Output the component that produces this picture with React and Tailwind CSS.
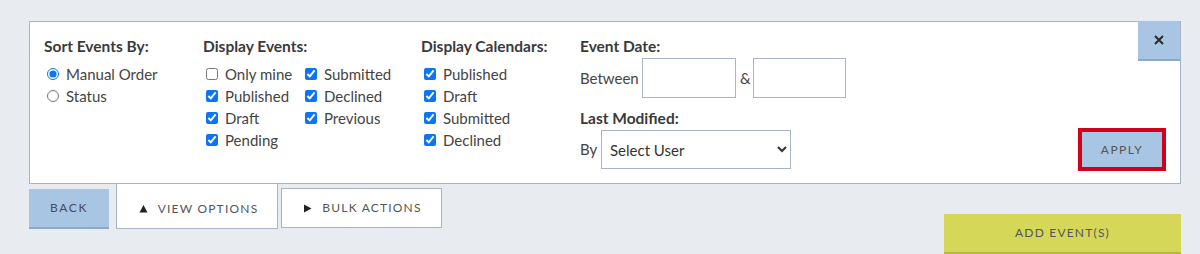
import React from 'react';

const font = { fontFamily: 'Lato, "Noto Sans", sans-serif' };

// 見出し
function Heading({ children }) {
  return (
    <div className="h-5 leading-5 text-[15.5px] font-bold text-[#3a3a3a]">{children}</div>
  );
}

function Check({ label, checked, type = 'checkbox', name }) {
  return (
    <label className="flex items-center h-[22px] text-[15px] text-[#444]">
      <input
        type={type}
        name={name}
        defaultChecked={checked}
        className="m-0 ml-[3px] mr-[7px] w-[12px] h-[12px] accent-[#0b75f5]"
      />
      {label}
    </label>
  );
}

function Tri({ dir }) {
  return (
    <svg width="9" height="9" viewBox="0 0 9 9" className="shrink-0">
      {dir === 'up' ? (
        <path d="M4.5 1 L8.5 8.5 L0.5 8.5 Z" fill="#222" />
      ) : (
        <path d="M1 0.5 L8.5 4.5 L1 8.5 Z" fill="#222" />
      )}
    </svg>
  );
}

export default function App() {
  return (
    <div className="h-[254px] bg-[#e8ecf1] pl-[29px] pr-[19px] pt-[21px] overflow-hidden" style={font}>
      {/* フィルタパネル */}
      <div className="relative h-[163px] bg-white border border-[#a8b4c3] flex pl-[14px] pt-[14px]">
        <div className="w-[159px]">
          <Heading>Sort Events By:</Heading>
          <div className="mt-[7px]">
            <Check type="radio" name="sort" label="Manual Order" checked />
            <Check type="radio" name="sort" label="Status" />
          </div>
        </div>

        <div className="w-[218px]">
          <Heading>Display Events:</Heading>
          <div className="mt-[7px] flex">
            <div className="w-[99px]">
              <Check label="Only mine" />
              <Check label="Published" checked />
              <Check label="Draft" checked />
              <Check label="Pending" checked />
            </div>
            <div>
              <Check label="Submitted" checked />
              <Check label="Declined" checked />
              <Check label="Previous" checked />
            </div>
          </div>
        </div>

        <div className="w-[159px]">
          <Heading>Display Calendars:</Heading>
          <div className="mt-[7px]">
            <Check label="Published" checked />
            <Check label="Draft" checked />
            <Check label="Submitted" checked />
            <Check label="Declined" checked />
          </div>
        </div>

        <div>
          <Heading>Event Date:</Heading>
          <div className="mt-[2px] flex items-center text-[15px] text-[#444]">
            <span className="w-[62px]">Between</span>
            <input className="w-[94px] h-[40px] border border-[#a8b4c3] bg-white" />
            <span className="w-[17px] pl-[4px]">&amp;</span>
            <input className="w-[93px] h-[40px] border border-[#a8b4c3] bg-white" />
          </div>
          <div className="mt-[10px]">
            <Heading>Last Modified:</Heading>
          </div>
          <div className="mt-[2px] flex items-center text-[15px] text-[#444]">
            <span className="w-[21px]">By</span>
            <select className="w-[190px] h-[39px] border border-[#a8b4c3] bg-white pl-[4px] text-[#333]">
              <option>Select User</option>
            </select>
          </div>
        </div>

        <div className="flex-1 flex justify-end items-start pr-[14px] pt-[92px]">
          <button className="w-[88px] h-[43px] border-4 border-[#d0021b] bg-[#a8c6e3] text-[12px] tracking-[0.12em] text-[#555]">
            APPLY
          </button>
        </div>

        <button className="absolute -top-px right-0 w-[42px] h-[40px] bg-[#a8c6e3] border-b-2 border-[#8ea9c6] flex items-center justify-center">
          <svg width="10" height="10" viewBox="0 0 10 10">
            <path d="M1 1 L9 9 M9 1 L1 9" stroke="#2a2a2a" strokeWidth="2" />
          </svg>
        </button>
      </div>

      {/* 下段のタブとボタン */}
      <div className="flex justify-between">
        <div className="flex items-start">
          <button className="mt-[5px] w-[80px] h-[40px] bg-[#a8c6e3] border-b-2 border-[#8ea9c6] text-[12px] tracking-[0.14em] text-[#4a4a5a]">
            BACK
          </button>
          <div className="-mt-px ml-[7px] w-[162px] h-[46px] pt-[6px] pl-[3px] bg-white border-x border-b border-[#a8b4c3] flex items-center justify-center gap-[10px] text-[12px] tracking-[0.1em] text-[#555]">
            <Tri dir="up" />
            <span>VIEW OPTIONS</span>
          </div>
          <div className="mt-[4px] ml-[3px] w-[161px] h-[40px] pl-[2px] bg-white border border-[#a8b4c3] flex items-center justify-center gap-[10px] text-[12px] tracking-[0.1em] text-[#555]">
            <Tri dir="right" />
            <span>BULK ACTIONS</span>
          </div>
        </div>
        <button className="mt-[30px] w-[237px] h-[40px] bg-[#d5d758] border-b-2 border-[#b8ba3f] text-[12px] tracking-[0.1em] text-[#555]">
          ADD EVENT(S)
        </button>
      </div>
    </div>
  );
}
